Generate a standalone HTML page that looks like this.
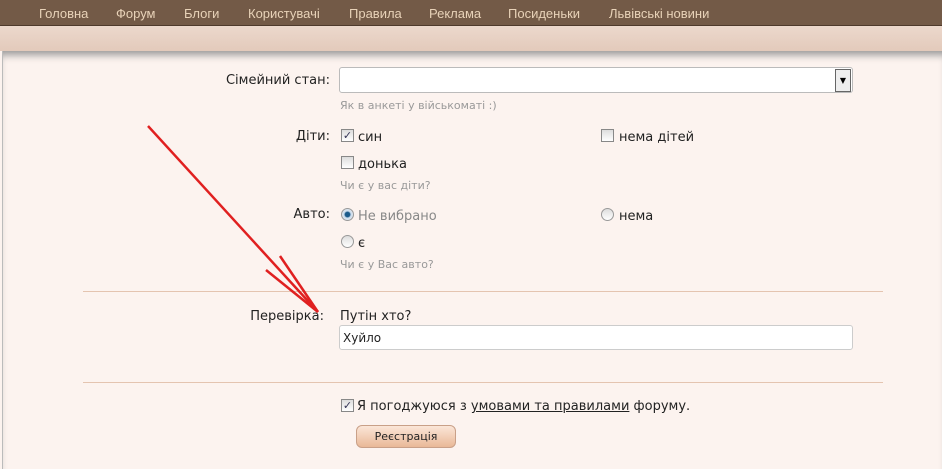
<!DOCTYPE html>
<html><head><meta charset="utf-8"><style>
body{margin:0;width:942px;height:469px;overflow:hidden;background:#fcf3ef;font-family:Verdana,"DejaVu Sans",sans-serif;position:relative}
.nav{position:absolute;left:0;top:0;width:942px;height:25px;background:#735a47;border-bottom:1px solid #4e3a2c}
.nav span{position:absolute;top:6px;font-family:"Liberation Sans",sans-serif;font-size:13px;color:#e8d2b8}
.band{position:absolute;top:26px;left:0;width:942px;height:25px;background:linear-gradient(#ecd8cc,#e3cabb)}
.content{position:absolute;top:51px;left:2px;width:940px;height:418px;background:#fcf3ef;border-left:1px solid #bbb;box-shadow:inset 0 8px 8px -4px #999}
.t{position:absolute;font-size:13px;color:#222;white-space:nowrap}
.h{position:absolute;font-size:11px;color:#999;white-space:nowrap}
.cb{position:absolute;width:11px;height:11px;border:1px solid #888;background:linear-gradient(#ddd,#fff)}
.rb{position:absolute;width:11px;height:11px;border:1px solid #999;border-radius:50%;background:linear-gradient(#ddd,#fff)}
.hr{position:absolute;left:83px;width:800px;height:1px;background:#e4c4b0}
</style></head><body>
<div class="nav">
<span style="left:39px">Головна</span><span style="left:116px">Форум</span><span style="left:184px">Блоги</span><span style="left:248px">Користувачі</span><span style="left:349px">Правила</span><span style="left:429px">Реклама</span><span style="left:508px">Посиденьки</span><span style="left:609px">Львівські новини</span>
</div>
<div class="band"></div>
<div class="content"></div>
<div class="t" style="right:612px;top:73px">Сімейний стан:</div>
<div style="position:absolute;left:339px;top:67px;width:512px;height:24px;border:1px solid #bbb;border-radius:3px;background:#fff"></div>
<div style="position:absolute;left:835px;top:69px;width:14px;height:21px;border:1px solid #666;background:#eee;font-size:8px;text-align:center;line-height:21px">▼</div>
<div class="h" style="left:340px;top:99px">Як в анкеті у військоматі :)</div>
<div class="t" style="right:612px;top:129px">Діти:</div>
<div class="cb" style="left:341px;top:129px;color:#335;font-size:11px;line-height:11px;text-align:center">✓</div><div class="t" style="left:358px;top:130px">син</div>
<div class="cb" style="left:601px;top:129px"></div><div class="t" style="left:619px;top:130px">нема дітей</div>
<div class="cb" style="left:341px;top:156px"></div><div class="t" style="left:358px;top:157px">донька</div>
<div class="h" style="left:340px;top:179px">Чи є у вас діти?</div>
<div class="t" style="right:612px;top:207px">Авто:</div>
<div class="rb" style="left:341px;top:208px;background:radial-gradient(#1a5a8a 30%,#cde 45%,#eee)"></div><div class="t" style="left:358px;top:209px;color:#888">Не вибрано</div>
<div class="rb" style="left:601px;top:208px"></div><div class="t" style="left:619px;top:209px">нема</div>
<div class="rb" style="left:341px;top:235px"></div><div class="t" style="left:358px;top:236px">є</div>
<div class="h" style="left:340px;top:258px">Чи є у Вас авто?</div>
<div class="hr" style="top:291px"></div>
<div class="t" style="right:618px;top:309px">Перевірка:</div>
<div class="t" style="left:340px;top:309px">Путін хто?</div>
<div style="position:absolute;left:339px;top:325px;width:512px;height:23px;border:1px solid #ccc;border-radius:3px;background:#fff"></div>
<div class="t" style="left:343px;top:331px;font-size:12px">Хуйло</div>
<div class="hr" style="top:382px"></div>
<div class="cb" style="left:341px;top:399px;color:#335;font-size:11px;line-height:11px;text-align:center">✓</div>
<div class="t" style="left:357px;top:399px">Я погоджуюся з <u>умовами та правилами</u> форуму.</div>
<div style="position:absolute;left:356px;top:425px;width:98px;height:21px;border:1px solid #c9a088;border-radius:6px;background:linear-gradient(#fbe6d8,#e9b897);font-size:11px;text-align:center;line-height:21px;color:#222">Реєстрація</div>
<svg style="position:absolute;left:0;top:0" width="942" height="469"><g stroke="#e02020" stroke-width="2.5" fill="none">
<line x1="148" y1="126" x2="318" y2="312"/><line x1="266" y1="270" x2="318" y2="312"/><line x1="280" y1="256" x2="318" y2="312"/>
</g></svg>
</body></html>
